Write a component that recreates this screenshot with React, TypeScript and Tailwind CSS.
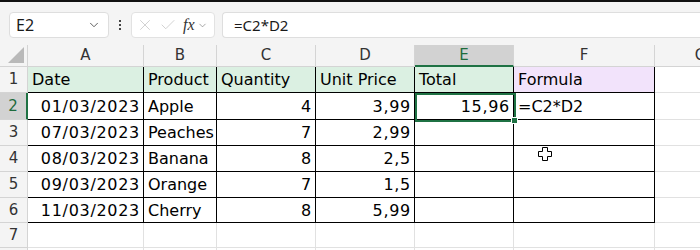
import { ChevronDown, X, Check } from "lucide-react";

const cols = [
  { key: "A", w: 116 },
  { key: "B", w: 73 },
  { key: "C", w: 99 },
  { key: "D", w: 99 },
  { key: "E", w: 99 },
  { key: "F", w: 141 },
  { key: "G", w: 92 },
];

type Cell = { v: string; right?: boolean };

const rows: { h: number; cells: Cell[] }[] = [
  {
    h: 26,
    cells: [
      { v: "Date" },
      { v: "Product" },
      { v: "Quantity" },
      { v: "Unit Price" },
      { v: "Total" },
      { v: "Formula" },
    ],
  },
  {
    h: 27,
    cells: [
      { v: "01/03/2023", right: true },
      { v: "Apple" },
      { v: "4", right: true },
      { v: "3,99", right: true },
      { v: "15,96", right: true },
      { v: "=C2*D2" },
    ],
  },
  {
    h: 26,
    cells: [
      { v: "07/03/2023", right: true },
      { v: "Peaches" },
      { v: "7", right: true },
      { v: "2,99", right: true },
      { v: "" },
      { v: "" },
    ],
  },
  {
    h: 26,
    cells: [
      { v: "08/03/2023", right: true },
      { v: "Banana" },
      { v: "8", right: true },
      { v: "2,5", right: true },
      { v: "" },
      { v: "" },
    ],
  },
  {
    h: 26,
    cells: [
      { v: "09/03/2023", right: true },
      { v: "Orange" },
      { v: "7", right: true },
      { v: "1,5", right: true },
      { v: "" },
      { v: "" },
    ],
  },
  {
    h: 25,
    cells: [
      { v: "11/03/2023", right: true },
      { v: "Cherry" },
      { v: "8", right: true },
      { v: "5,99", right: true },
      { v: "" },
      { v: "" },
    ],
  },
  { h: 25, cells: [] },
  { h: 25, cells: [] },
];

const font = { fontFamily: '"DejaVu Sans", sans-serif' };

function Toolbar() {
  return (
    <div className="h-[43px] bg-[#f4f4f4] flex items-start pt-[10px] pl-[9px]">
      <div className="w-[100px] h-[26px] bg-white border border-[#dedede] rounded-[4px] flex items-center justify-between pl-[6px] pr-[7px]">
        <span className="text-[16px] text-[#1a1a1a]" style={{ fontFamily: '"Noto Sans", sans-serif' }}>
          E2
        </span>
        <ChevronDown size={14} strokeWidth={1.6} className="text-[#555]" />
      </div>
      <div className="w-[22px] h-[26px] flex items-center justify-center">
        <div className="flex flex-col gap-[2px]">
          <span className="w-[2px] h-[2px] bg-[#444]" />
          <span className="w-[2px] h-[2px] bg-[#444]" />
          <span className="w-[2px] h-[2px] bg-[#444]" />
        </div>
      </div>
      <div className="w-[84px] h-[26px] bg-white border border-[#e2e2e2] rounded-[4px] flex items-center pl-[4px]">
        <X size={18} strokeWidth={1.1} className="text-[#c8c8c8]" />
        <Check size={18} strokeWidth={1.1} className="text-[#c8c8c8] ml-[5px]" />
        <span
          className="ml-[6px] text-[16px] italic text-[#333] leading-none"
          style={{ fontFamily: '"Liberation Serif", serif' }}
        >
          fx
        </span>
        <ChevronDown size={11} strokeWidth={1.4} className="text-[#777] ml-[2px]" />
      </div>
      <div className="ml-[7px] flex-1 h-[26px] bg-white border border-[#dedede] rounded-l-[4px] border-r-0 flex items-center pl-[11px]">
        <span className="text-[15px] text-[#1a1a1a]" style={{ fontFamily: '"Noto Sans", sans-serif' }}>
          =C2*D2
        </span>
      </div>
    </div>
  );
}

function ColumnHeader() {
  return (
    <div className="flex h-[22px] bg-[#f4f4f4]">
      <div className="w-[28px] shrink-0 h-full border-r border-b border-[#d4d4d4] relative">
        <div
          className="absolute right-[3px] bottom-[3px] w-[16px] h-[16px] bg-[#b9b9b9]"
          style={{ clipPath: "polygon(100% 0, 100% 100%, 0 100%)" }}
        />
      </div>
      {cols.map((c) => {
        const sel = c.key === "E";
        return (
          <div
            key={c.key}
            style={{ width: c.w, ...font }}
            className={`h-full shrink-0 flex items-center justify-center text-[15px] border-r ${
              sel
                ? "bg-[#d2d2d2] text-[#1e6b3c] border-[#d4d4d4] border-b-2 border-b-[#1f7244]"
                : "text-[#333] border-[#d4d4d4] border-b"
            }`}
          >
            {c.key}
          </div>
        );
      })}
    </div>
  );
}

function Grid() {
  return (
    <div>
      {rows.map((r, ri) => {
        const n = ri + 1;
        const inTable = n <= 6;
        const selRow = n === 2;
        return (
          <div key={n} className="flex" style={{ height: r.h }}>
            <div
              className={`w-[28px] shrink-0 h-full flex items-center justify-center text-[15px] border-b border-[#d4d4d4] ${
                selRow
                  ? "bg-[#d2d2d2] text-[#1e6b3c] border-r-2 border-r-[#1f7244]"
                  : "bg-[#f4f4f4] text-[#333] border-r"
              }`}
              style={font}
            >
              {n <= 7 ? n : ""}
            </div>
            {cols.map((c, ci) => {
              const cell = r.cells[ci];
              const black = inTable && ci < 6;
              let bg = "bg-white";
              if (n === 1 && ci < 5) bg = "bg-[#dbf0e2]";
              if (n === 1 && ci === 5) bg = "bg-[#f2e3fb]";
              return (
                <div
                  key={c.key}
                  style={{ width: c.w, ...font }}
                  className={`shrink-0 h-full border-r border-b flex items-center pt-[1px] text-[16px] text-black whitespace-nowrap overflow-hidden ${bg} ${
                    black ? "border-black" : "border-[#e1e1e1]"
                  } ${cell?.right ? "justify-end pr-[3px] tracking-[0.7px]" : "pl-[4px]"}`}
                >
                  {cell?.v}
                </div>
              );
            })}
          </div>
        );
      })}
    </div>
  );
}

export default function App() {
  return (
    <div className="w-[700px] h-[250px] overflow-hidden bg-white relative">
      <div className="h-[2px] bg-[#111]" />
      <Toolbar />
      <ColumnHeader />
      <Grid />
      {/* selected cell E2 */}
      <div className="absolute left-[415px] top-[93px] w-[101px] h-[29px] border-2 border-[#1f7244]" />
      <div className="absolute left-[511px] top-[117px] w-[7px] h-[7px] bg-[#1f7244] border border-white" />
      {/* mouse cursor */}
      <svg className="absolute left-[538px] top-[147px]" width="14" height="14" viewBox="0 0 14 14">
        <path
          d="M4.5 0.5h5v4h4v5h-4v4h-5v-4h-4v-5h4z"
          fill="white"
          stroke="black"
          strokeWidth="1"
        />
      </svg>
    </div>
  );
}
